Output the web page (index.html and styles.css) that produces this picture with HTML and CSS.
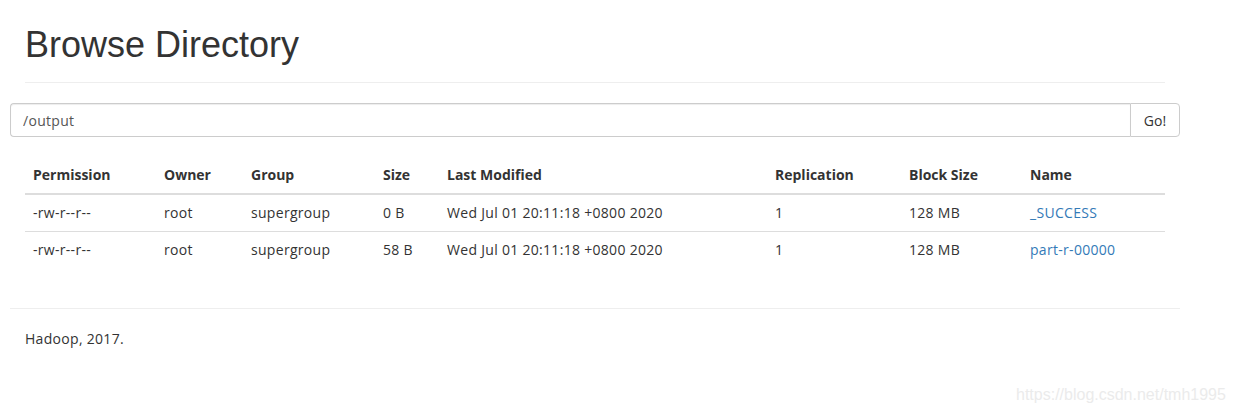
FILE: index.html
```html
<!DOCTYPE html>
<html>
<head>
<meta charset="utf-8">
<link rel="stylesheet" href="styles.css">
</head>
<body>
<div class="page">
  <div class="page-header">
    <h1>Browse Directory</h1>
  </div>
  <div class="input-group">
    <input class="form-control" type="text" value="/output">
    <button class="btn">Go!</button>
  </div>
  <div class="inner">
    <table class="table">
      <colgroup>
        <col class="c1"><col class="c2"><col class="c3"><col class="c4"><col class="c5"><col class="c6"><col class="c7"><col class="c8">
      </colgroup>
      <thead>
        <tr><th>Permission</th><th>Owner</th><th>Group</th><th>Size</th><th>Last Modified</th><th>Replication</th><th>Block Size</th><th>Name</th></tr>
      </thead>
      <tbody>
        <tr><td>-rw-r--r--</td><td>root</td><td>supergroup</td><td>0 B</td><td>Wed Jul 01 20:11:18 +0800 2020</td><td>1</td><td>128 MB</td><td><a href="#">_SUCCESS</a></td></tr>
        <tr><td>-rw-r--r--</td><td>root</td><td>supergroup</td><td>58 B</td><td>Wed Jul 01 20:11:18 +0800 2020</td><td>1</td><td>128 MB</td><td><a href="#">part-r-00000</a></td></tr>
      </tbody>
    </table>
  </div>
  <hr class="footer-rule">
  <div class="inner footer">Hadoop, 2017.</div>
</div>
<div class="watermark">https://blog.csdn.net/tmh1995</div>
</body>
</html>
```

FILE: styles.css
```css
html, body {
  margin: 0;
  padding: 0;
  background: #fff;
}
body {
  font-family: "Open Sans", "Noto Sans", sans-serif;
  font-size: 14px;
  line-height: 20px;
  color: #333;
}
.page {
  width: 1170px;
  margin-left: 10px;
}
.page-header {
  margin: 0 15px;
  padding-bottom: 9px;
  border-bottom: 1px solid #eee;
  margin-bottom: 20px;
}
h1 {
  margin: 25px 0 8px;
  font-family: "Liberation Sans", Arial, sans-serif;
  font-weight: 500;
  font-size: 36px;
  line-height: 40px;
  color: #333;
}
.input-group {
  display: flex;
  height: 34px;
}
.form-control {
  flex: 1;
  box-sizing: border-box;
  height: 34px;
  margin: 0;
  padding: 6px 12px;
  border: 1px solid #ccc;
  border-right: none;
  border-radius: 4px 0 0 4px;
  font-family: inherit;
  font-size: 14px;
  letter-spacing: 0.3px;
  color: #555;
  box-shadow: inset 0 1px 1px rgba(0,0,0,.075);
  outline: none;
}
.btn {
  box-sizing: border-box;
  width: 50px;
  height: 34px;
  margin: 0;
  padding: 6px 12px;
  border: 1px solid #ccc;
  border-radius: 0 4px 4px 0;
  background: #fff;
  font-family: inherit;
  font-size: 14px;
  color: #333;
}
.inner {
  padding: 0 15px;
}
.table {
  width: 1140px;
  margin-top: 20px;
  margin-bottom: 0;
  border-collapse: collapse;
  table-layout: fixed;
}
.c1 { width: 131px; }
.c2 { width: 87px; }
.c3 { width: 132px; }
.c4 { width: 64px; }
.c5 { width: 328px; }
.c6 { width: 134px; }
.c7 { width: 121px; }
.c8 { width: 143px; }
.table th, .table td {
  padding: 8px;
  text-align: left;
  vertical-align: top;
  line-height: 20px;
  white-space: nowrap;
}
.table th {
  font-weight: bold;
  border-bottom: 2px solid #ddd;
}
.table td {
  border-top: 1px solid #ddd;
  letter-spacing: 0.3px;
}
.table thead + tbody tr:first-child td {
  border-top: 0;
}
.table a {
  color: #337ab7;
  text-decoration: none;
}
.footer-rule {
  margin: 40px 0 20px;
  border: 0;
  border-top: 1px solid #eee;
}
.footer {
  line-height: 20px;
  letter-spacing: 0.3px;
}
.watermark {
  position: absolute;
  left: 1016px;
  top: 385px;
  font-family: "Liberation Sans", Arial, sans-serif;
  font-size: 16px;
  color: #ebebeb;
}
```
